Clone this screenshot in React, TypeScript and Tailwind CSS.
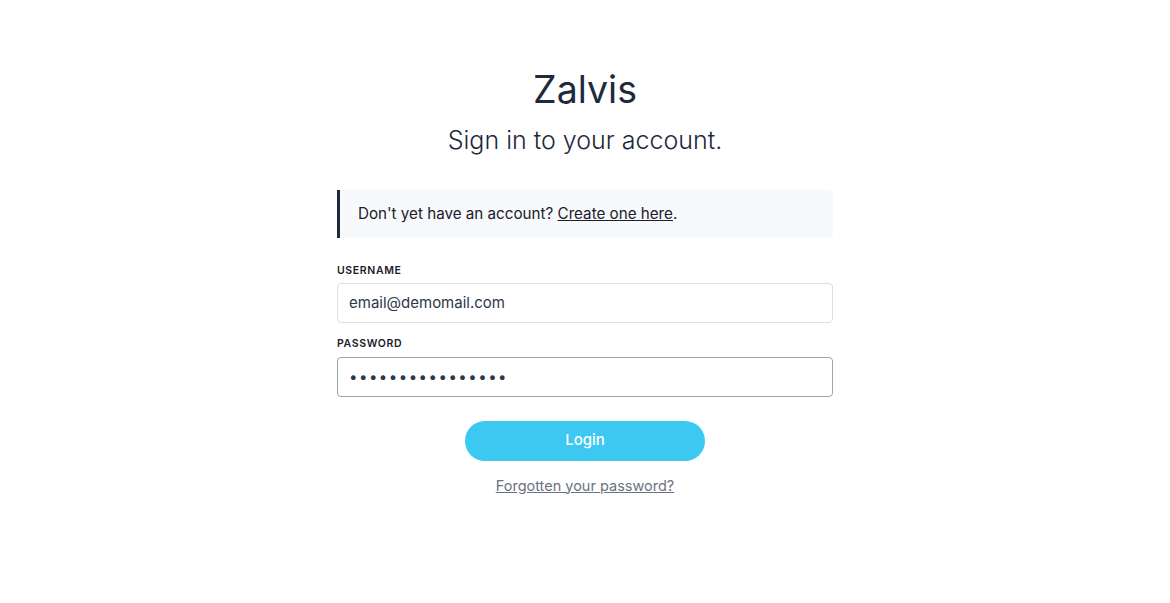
export default function App() {
  return (
    <div
      className="min-h-screen bg-white flex justify-center text-[#1a202c]"
      style={{ fontFamily: "Inter, 'Noto Sans', sans-serif" }}
    >
      <div className="w-[496px] pt-[64px] flex flex-col">
        <h1 className="text-center text-[37.5px] leading-[52px] font-normal text-[#1e293b]">Zalvis</h1>
        <p className="text-center text-[25px] leading-[34px] font-light text-[#1e293b] mt-[7px]">
          Sign in to your account.
        </p>

        <div className="mt-[33px] h-[48px] flex items-center bg-[#f7f9fb] border-l-[3px] border-[#1e293b] rounded-r pl-[18px] text-[15.2px]">
          Don't yet have an account?&nbsp;
          <a href="#" className="underline">Create one here</a>.
        </div>

        <form className="mt-[25px] flex flex-col" onSubmit={(e) => e.preventDefault()}>
          <label className="text-[10.5px] font-semibold tracking-[0.06em] text-[#1a202c] mb-[4px]">USERNAME</label>
          <input
            type="text"
            defaultValue="email@demomail.com"
            className="h-[40px] border border-[#dcdfe3] rounded px-[11px] text-[15px] text-[#2d3748] outline-none"
          />
          <label className="text-[10.5px] font-semibold tracking-[0.06em] text-[#1a202c] mt-[13px] mb-[5px]">PASSWORD</label>
          <input
            type="password"
            defaultValue="passwordpassword"
            className="h-[40px] border border-[#a0a4a8] rounded px-[11px] text-[15px] text-[#2d3748] tracking-[0.1em] outline-none"
          />
          <div className="flex justify-center mt-[24px]">
            <button
              type="submit"
              className="w-[240px] h-[40px] rounded-full bg-[#3cc8f1] text-white text-[15px] font-medium"
            >
              Login
            </button>
          </div>
          <div className="text-center mt-[12px]">
            <a href="#" className="text-[14.5px] text-[#6b7280] underline">Forgotten your password?</a>
          </div>
        </form>
      </div>
    </div>
  );
}
